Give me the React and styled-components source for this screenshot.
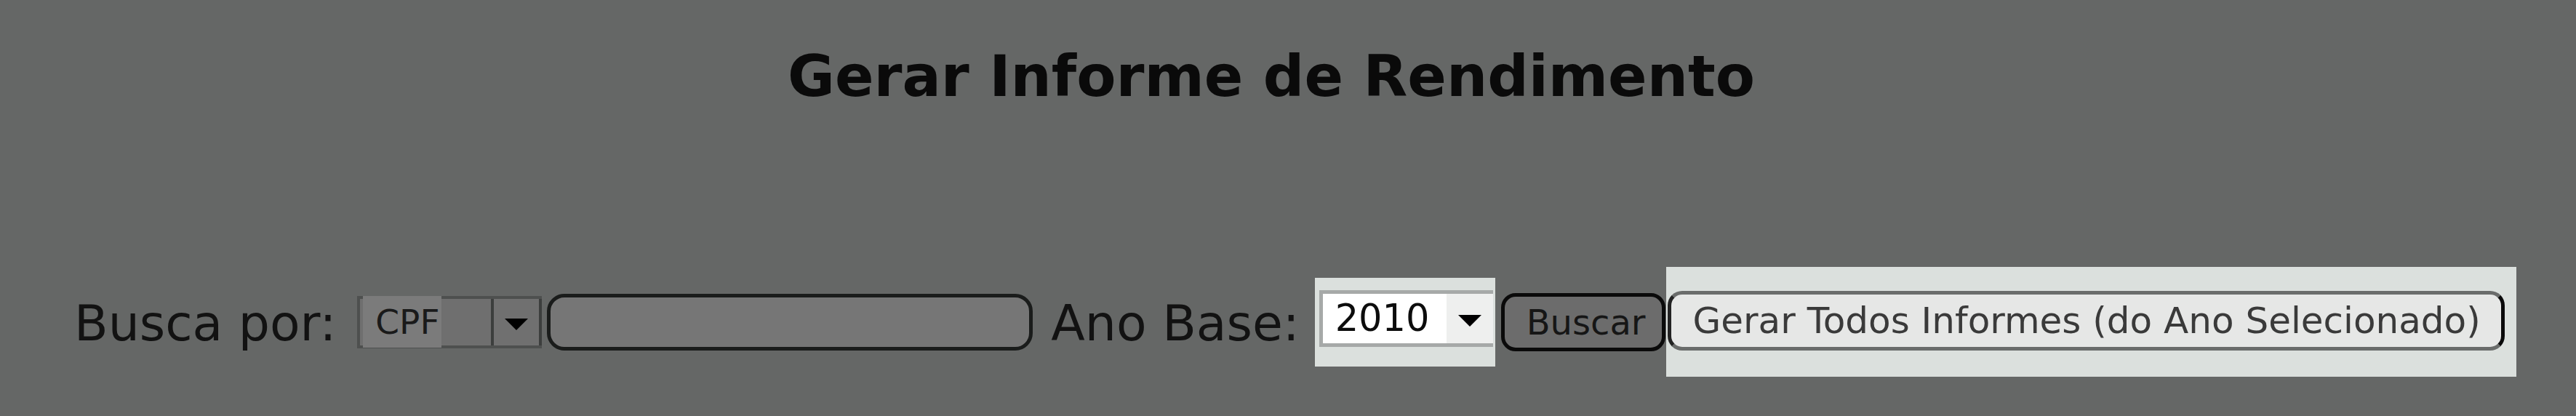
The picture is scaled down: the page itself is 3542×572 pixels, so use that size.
import React from "react";
import styled, { createGlobalStyle } from "styled-components";

const GlobalStyle = createGlobalStyle`
  html, body {
    margin: 0;
    padding: 0;
    background-color: #656766;
  }
  body {
    font-family: "DejaVu Sans", Verdana, sans-serif;
    color: #111;
  }
`;

const Page = styled.div`
  width: 3542px;
  height: 572px;
  background-color: #656766;
  overflow: hidden;
`;

const Title = styled.h1`
  margin: 0;
  padding: 66px 46px 0 0;
  text-align: center;
  font-size: 79px;
  line-height: 79px;
  font-weight: bold;
  color: #0a0a0a;
`;

const SearchRow = styled.div`
  display: flex;
  align-items: center;
  margin-top: 222px;
  padding-left: 102px;
`;

const Label = styled.span`
  font-size: 68px;
  line-height: 1;
  color: #121212;
  white-space: nowrap;
  margin-left: ${(props) => props.$before || 0}px;
  position: relative;
  top: 2px;
`;

// moldura clara em volta de alguns campos (foco)
const Highlight = styled.div`
  display: flex;
  align-items: stretch;
  background-color: #dbe0dd;
  margin-left: ${(props) => props.$before || 0}px;
  padding: ${(props) => props.$pad};
`;

const Select = styled.div`
  display: flex;
  align-items: stretch;
  box-sizing: border-box;
  width: ${(props) => props.$width}px;
  height: ${(props) => props.$height}px;
  margin-left: ${(props) => props.$before || 0}px;
  border: ${(props) => (props.$light ? "5px solid #a6a9a8" : "4px solid #4e504f")};
  border-right: none;
  background-color: ${(props) => (props.$light ? "#ffffff" : "#6f6f6f")};
`;

const SelectValue = styled.div`
  flex: 1;
  display: flex;
  align-items: center;
  font-size: ${(props) => (props.$light ? 51 : 47)}px;
  color: ${(props) => (props.$light ? "#0c0c0c" : "#1a1a1a")};
  padding-left: ${(props) => (props.$light ? 17 : 21)}px;
  span {
    background-color: ${(props) => (props.$light ? "transparent" : "#7b7b7b")};
    padding: 8px 0;
    margin-left: ${(props) => (props.$light ? 0 : -17)}px;
    padding-left: ${(props) => (props.$light ? 0 : 17)}px;
    padding-right: 2px;
  }
`;

const ArrowBox = styled.div`
  box-sizing: border-box;
  width: ${(props) => (props.$light ? 64 : 70)}px;
  margin-left: ${(props) => (props.$light ? 5 : 0)}px;
  display: flex;
  align-items: center;
  justify-content: center;
  background-color: ${(props) => (props.$light ? "#eeefee" : "#707070")};
  border: ${(props) => (props.$light ? "none" : "4px solid #3c3e3d")};
  border-top: none;
  border-bottom: none;
`;

const Arrow = styled.div`
  width: 0;
  height: 0;
  border-left: 16px solid transparent;
  border-right: 16px solid transparent;
  border-top: 16px solid #000;
  margin-top: 6px;
`;

const TextInput = styled.input`
  box-sizing: border-box;
  width: 668px;
  height: 78px;
  margin-left: 7px;
  border: 5px solid #1a1c1b;
  border-radius: 24px;
  background-color: #767676;
  outline: none;
  padding: 0 20px;
  font-family: "DejaVu Sans", Verdana, sans-serif;
  font-size: 48px;
`;

const Button = styled.button`
  box-sizing: border-box;
  height: ${(props) => (props.$light ? 82 : 80)}px;
  margin-left: ${(props) => props.$before || 0}px;
  padding: 0 ${(props) => (props.$light ? 28 : 22)}px 0 30px;
  border-radius: 20px;
  border: ${(props) => (props.$light ? "5px solid #6a6c6b" : "5px solid #0a0a0a")};
  border-left-color: ${(props) => (props.$light ? "#222" : "#0a0a0a")};
  border-right-color: #0a0a0a;
  background-color: ${(props) => (props.$light ? "#e6e7e6" : "#6c6c6c")};
  color: ${(props) => (props.$light ? "#3a3a3a" : "#161616")};
  font-family: "DejaVu Sans", Verdana, sans-serif;
  font-size: ${(props) => (props.$light ? 50 : 48)}px;
  line-height: 1;
  white-space: nowrap;
  cursor: pointer;
`;

export default function App() {
  return (
    <Page>
      <GlobalStyle />
      <Title>Gerar Informe de Rendimento</Title>
      <SearchRow>
        <Label>Busca por:</Label>
        <Select $width={254} $height={72} $before={29}>
          <SelectValue>
            <span>CPF</span>
          </SelectValue>
          <ArrowBox>
            <Arrow />
          </ArrowBox>
        </Select>
        <TextInput type="text" />
        <Label $before={25}>Ano Base:</Label>
        <Highlight $before={21} $pad="17px 3px 27px 6px">
          <Select $width={239} $height={78} $light>
            <SelectValue $light>
              <span>2010</span>
            </SelectValue>
            <ArrowBox $light>
              <Arrow />
            </ArrowBox>
          </Select>
        </Highlight>
        <Button $before={8}>Buscar</Button>
        <Highlight $before={1} $pad="33px 16px 36px 2px">
          <Button $light>Gerar Todos Informes (do Ano Selecionado)</Button>
        </Highlight>
      </SearchRow>
    </Page>
  );
}
